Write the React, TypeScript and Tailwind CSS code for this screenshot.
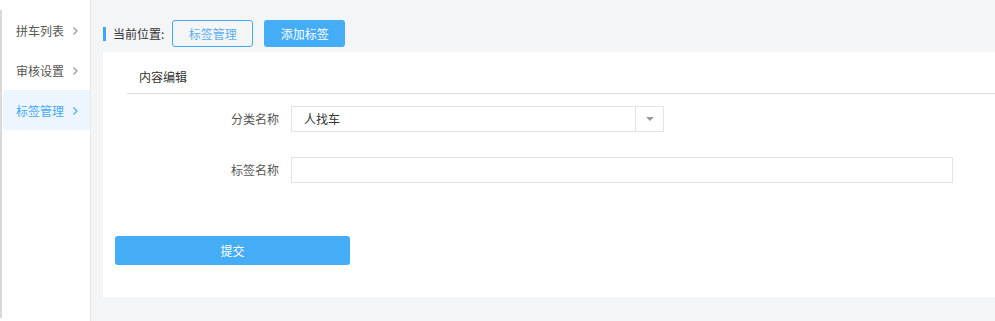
import React from "react";

const font = { fontFamily: '"Noto Sans CJK SC", "Microsoft YaHei", sans-serif' };

function Chevron({ color }: { color: string }) {
  return (
    <svg width="7" height="10" viewBox="0 0 7 10" fill="none">
      <polyline points="1.5,1.5 5,5 1.5,8.5" stroke={color} strokeWidth="1.2" />
    </svg>
  );
}

export default function App() {
  const items = [
    { t: "拼车列表", active: false },
    { t: "审核设置", active: false },
    { t: "标签管理", active: true },
  ];
  return (
    <div className="flex h-[321px] w-[995px] bg-[#f4f5f7] text-[12px]" style={font}>
      <div className="w-[91px] shrink-0 bg-white border-r border-[#e8e8e8] pt-[13px]">
        <div className="h-full border-l-[2px] border-[#d9d9d9]">
          <div className="-mt-[3px]">
            {items.map((it) => (
              <div
                key={it.t}
                className={
                  "flex h-[40px] items-center justify-between pl-[13px] pr-[11px] pt-[1px] ml-[1px] " +
                  (it.active ? "bg-[#edf6ff] text-[#45a8f5]" : "text-[#555555]")
                }
              >
                <span>{it.t}</span>
                <Chevron color={it.active ? "#45a8f5" : "#999999"} />
              </div>
            ))}
          </div>
        </div>
      </div>
      <div className="flex-1 pl-[12px] pt-[20px]">
        <div className="flex h-[27px] items-center">
          <div className="h-[14px] w-[3px] bg-[#3fa5f5]" />
          <span className="ml-[7px] text-[#333333]">当前位置:</span>
          <div className="ml-[8px] flex h-[27px] w-[81px] items-center justify-center rounded-[3px] border border-[#45a8f5] text-[#5aaef0]">
            标签管理
          </div>
          <div className="ml-[11px] flex h-[27px] w-[81px] items-center justify-center rounded-[3px] bg-[#45acf6] text-white">
            添加标签
          </div>
        </div>
        <div className="mt-[5px] h-[245px] bg-white">
          <div className="ml-[24px] h-[42px] border-b border-[#dcdcdc] pl-[12px] pt-[16px] text-[#333333] leading-[18px]">
            内容编辑
          </div>
          <div className="mt-[12px] flex items-center">
            <div className="w-[188px] pr-[12px] text-right text-[#555555]">分类名称</div>
            <div className="flex h-[26px] w-[373px] items-center border border-[#e3e3e3]">
              <span className="flex-1 pl-[12px] text-[#333333]">人找车</span>
              <div className="flex h-full w-[28px] items-center justify-center border-l border-[#e3e3e3]">
                <svg width="8" height="5" viewBox="0 0 8 5">
                  <polygon points="0,0 8,0 4,4" fill="#999999" />
                </svg>
              </div>
            </div>
          </div>
          <div className="mt-[25px] flex items-center">
            <div className="w-[188px] pr-[12px] text-right text-[#555555]">标签名称</div>
            <div className="h-[26px] w-[662px] border border-[#e3e3e3]" />
          </div>
          <div className="ml-[12px] mt-[53px] flex h-[29px] w-[235px] items-center justify-center rounded-[3px] bg-[#45acf6] text-white">
            提交
          </div>
        </div>
      </div>
    </div>
  );
}
